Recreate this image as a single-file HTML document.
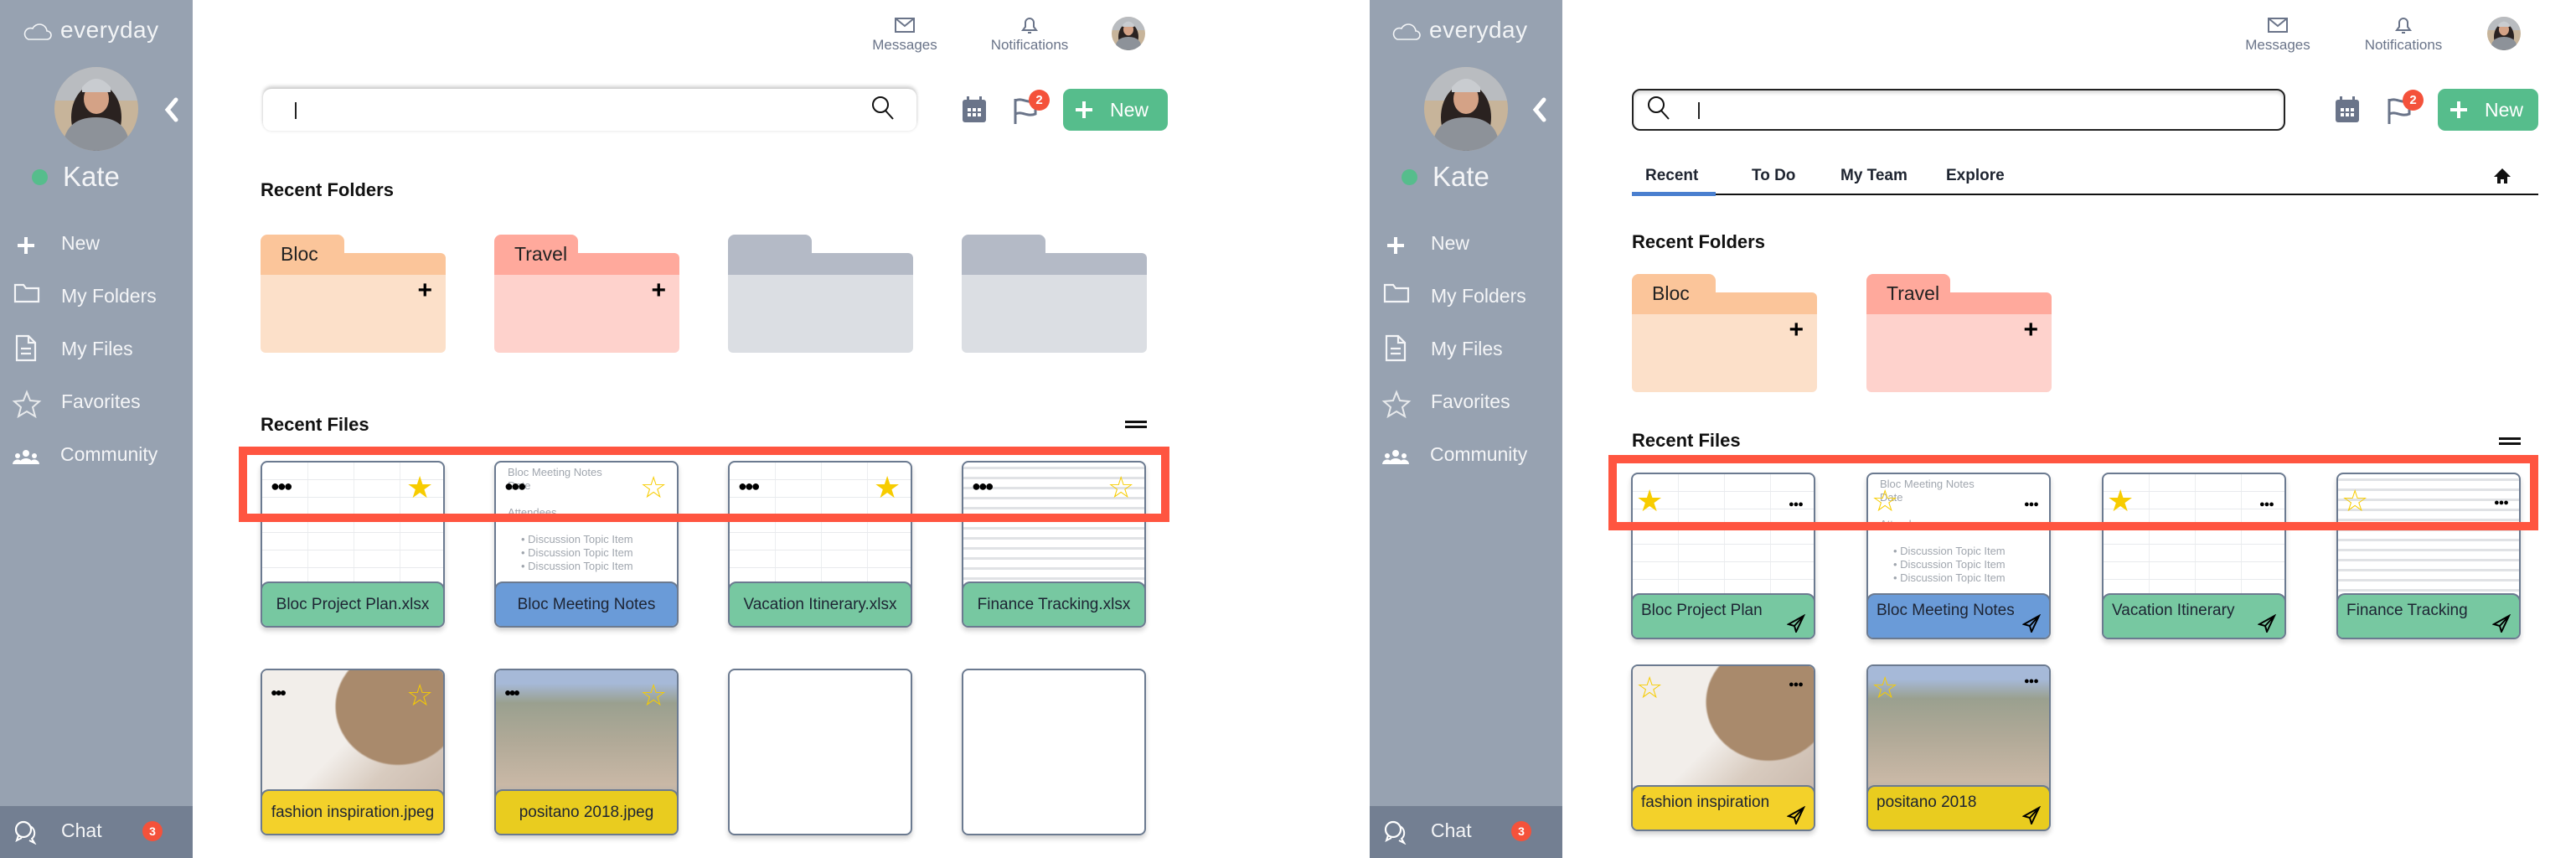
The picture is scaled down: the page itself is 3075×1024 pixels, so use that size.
<!DOCTYPE html>
<html><head><meta charset="utf-8"><style>
*{box-sizing:border-box;margin:0;padding:0}
body{width:3075px;height:1024px;position:relative;background:#fff;font-family:"Liberation Sans",sans-serif;overflow:hidden;color:#1e2430}
.a{position:absolute}
.side{position:absolute;top:0;width:230px;height:1024px;background:#97a2b1}
.chat{position:absolute;left:0;bottom:0;width:230px;height:62px;background:#737f92}
.logo{position:absolute;top:20px;color:#f2f4f6;font-size:28px;letter-spacing:0.5px}
.nav{position:absolute;color:#f4f5f7;font-size:23px}
.kate{position:absolute;color:#f4f5f7;font-size:33px}
.dot{position:absolute;width:19px;height:19px;border-radius:50%;background:#56bd8c}
.hd{position:absolute;color:#6a7489;font-size:17px;text-align:center;width:140px}
.search{position:absolute;top:106px;height:50px;border-radius:10px;background:#fff}
.newb{position:absolute;top:106px;height:50px;width:125px;background:#56bd8c;border-radius:9px;color:#fff;font-size:23px;line-height:50px}
.badge{position:absolute;background:#f4523b;color:#fff;border-radius:50%;text-align:center;font-weight:bold}
.h2{position:absolute;font-size:22px;font-weight:bold;color:#111}
.fold{position:absolute;width:221px;height:141px}
.fold .t{position:absolute;left:0;top:0;width:100px;height:30px;border-radius:8px 8px 0 0}
.fold .b1{position:absolute;left:0;top:22px;width:100%;height:26px;border-radius:0 6px 0 0}
.fold .b2{position:absolute;left:0;top:48px;width:100%;height:93px;border-radius:0 0 6px 6px}
.fold .nm{position:absolute;left:24px;top:10px;font-size:23px;color:#222}
.fold .pl{position:absolute;right:16px;top:50px;font-size:30px;font-weight:bold;color:#000}
.card{position:absolute;width:220px;height:199px;border:2px solid #6b7a90;border-radius:8px;background:#fff;overflow:hidden;box-shadow:0 4px 6px rgba(0,0,0,.18)}
.sheet{position:absolute;inset:0;background:repeating-linear-gradient(180deg,transparent 0 20px,#e8eaed 20px 21px),repeating-linear-gradient(90deg,transparent 0 54px,#eceef0 54px 55px)}
.band{position:absolute;left:-2px;right:-2px;bottom:-2px;height:55px;border:2px solid #6b7a90;border-radius:10px 10px 8px 8px;font-size:19px;color:#1d2433}
.star{position:absolute;font-size:36px;color:#f7cc00;line-height:36px}
.dots{position:absolute;font-size:18px;font-weight:bold;letter-spacing:-3px;color:#000}
.red{position:absolute;border:10px solid #ff5540}
.notes{position:absolute;left:14px;top:4px;color:#a0a6ae;font-size:13px;line-height:16px}
.photo1{position:absolute;inset:0;background:radial-gradient(ellipse at 75% 22%,#a98a6c 0 32%,transparent 33%),linear-gradient(135deg,#f2eeea 0 45%,#d8cbbf 65%,#c4b2a5)}
.photo2{position:absolute;inset:0;background:linear-gradient(180deg,#a6b9d8 0 8%,#9aa08f 20%,#b2aa98 45%,#c9b8a6 70%,#a4aab0 85%,#8e99a4)}
</style></head><body>

<svg width="0" height="0" style="position:absolute"><defs>
<clipPath id="cc"><circle cx="50" cy="50" r="50"/></clipPath>
<g id="face"><g clip-path="url(#cc)"><rect width="100" height="100" fill="#c7b49a"/><rect y="0" width="100" height="40" fill="#b9bcc0"/><ellipse cx="50" cy="60" rx="30" ry="40" fill="#2a2220"/><ellipse cx="50" cy="38" rx="15" ry="18" fill="#d4a286"/><path d="M33 24q17-20 34 0v6H33z" fill="#c9ccd0"/><path d="M10 100q0-40 40-40t40 40z" fill="#8d9299"/></g></g>
</defs></svg>

<!-- LEFT PANEL -->
<div class="side" style="left:0"></div>
<svg class="a" style="left:28px;top:26px" width="34" height="22" viewBox="0 0 34 22"><path d="M6 21h22a5 5 0 0 0 0-10 9 9 0 0 0-17-3 6 6 0 0 0-5 13z" fill="none" stroke="#f2f4f6" stroke-width="1.6"/></svg>
<div class="logo" style="left:72px">everyday</div>
<svg class="a" style="left:65px;top:80px" width="100" height="100" viewBox="0 0 100 100"><use href="#face"/></svg>
<svg class="a" style="left:195px;top:116px" width="20" height="30"><path d="M15 3L5 15l10 12" stroke="#fff" stroke-width="5" fill="none" stroke-linecap="round"/></svg>
<div class="dot" style="left:38px;top:202px"></div>
<div class="kate" style="left:75px;top:192px">Kate</div>
<svg class="a" style="left:0;top:270px" width="60" height="300">
<path d="M31 13v20M21 23h20" stroke="#fff" stroke-width="4"/>
<path d="M18 70h10l3 4h15v16H18z" fill="none" stroke="#f4f5f7" stroke-width="2.2"/>
<path d="M20 131h14l8 8v21H20z M34 131v8h8 M25 146h12M25 152h12" fill="none" stroke="#f4f5f7" stroke-width="2.2"/>
<path d="M32 198l4 10 11 1-8 7 3 11-10-6-10 6 3-11-8-7 11-1z" fill="none" stroke="#e8eaec" stroke-width="2"/>
<g fill="#fff"><circle cx="31" cy="271" r="4"/><circle cx="21" cy="274" r="3"/><circle cx="41" cy="274" r="3"/><path d="M23 284a8 7 0 0 1 16 0z"/><path d="M15 284a6 6 0 0 1 10-4v4z"/><path d="M37 280a6 6 0 0 1 10 4H37z"/></g>
</svg>
<div class="nav" style="left:73px;top:277px">New</div>
<div class="nav" style="left:73px;top:340px">My Folders</div>
<div class="nav" style="left:73px;top:403px">My Files</div>
<div class="nav" style="left:73px;top:466px">Favorites</div>
<div class="nav" style="left:72px;top:529px">Community</div>
<div class="chat"></div>
<svg class="a" style="left:16px;top:978px" width="30" height="30"><circle cx="12" cy="12" r="9" fill="none" stroke="#fff" stroke-width="2.2"/><path d="M6 19l-2 6 6-3" fill="none" stroke="#fff" stroke-width="2"/><path d="M20 8a9 9 0 0 1 2 15l3 5-6-3" fill="none" stroke="#fff" stroke-width="2"/></svg>
<div class="nav" style="left:73px;top:978px">Chat</div>
<div class="badge" style="left:170px;top:980px;width:24px;height:24px;font-size:14px;line-height:24px">3</div>

<svg class="a" style="left:1068px;top:21px" width="24" height="18"><rect x="1" y="1" width="22" height="16" fill="none" stroke="#6a7489" stroke-width="2"/><path d="M1 1l11 9 11-9" fill="none" stroke="#6a7489" stroke-width="2"/></svg>
<div class="hd" style="left:1010px;top:44px">Messages</div>
<svg class="a" style="left:1217px;top:18px" width="24" height="24"><path d="M4 18h16l-3-4V9a5 5 0 0 0-10 0v5z M10 21h4" fill="none" stroke="#6a7489" stroke-width="2"/></svg>
<div class="hd" style="left:1159px;top:44px">Notifications</div>
<svg class="a" style="left:1327px;top:20px" width="40" height="40" viewBox="0 0 100 100"><use href="#face"/></svg>

<div class="search" style="left:314px;width:780px;box-shadow:0 -3px 4px rgba(0,0,0,.2),0 1px 3px rgba(0,0,0,.08)"></div>
<div class="a" style="left:352px;top:122px;width:2px;height:20px;background:#222"></div>
<svg class="a" style="left:1040px;top:114px" width="30" height="34"><circle cx="11" cy="11" r="9" fill="none" stroke="#111" stroke-width="2"/><path d="M17 18l9 10" stroke="#111" stroke-width="2"/></svg>
<svg class="a" style="left:1148px;top:115px" width="30" height="32"><rect x="1" y="4" width="28" height="27" rx="3" fill="#6a7489"/><rect x="6" y="0" width="3" height="8" fill="#6a7489"/><rect x="21" y="0" width="3" height="8" fill="#6a7489"/><g fill="#fff"><rect x="7" y="14" width="4" height="4"/><rect x="13" y="14" width="4" height="4"/><rect x="19" y="14" width="4" height="4"/><rect x="7" y="20" width="4" height="4"/><rect x="13" y="20" width="4" height="4"/><rect x="19" y="20" width="4" height="4"/></g></svg>
<svg class="a" style="left:1208px;top:114px" width="32" height="34"><path d="M4 4v30 M4 6c8-4 14 4 24 0v16c-10 4-16-4-24 0" fill="none" stroke="#6a7489" stroke-width="3"/></svg>
<div class="badge" style="left:1228px;top:107px;width:25px;height:25px;font-size:15px;line-height:25px">2</div>
<div class="newb" style="left:1269px"><svg class="a" style="left:14px;top:14px" width="22" height="22"><path d="M11 1v20M1 11h20" stroke="#fff" stroke-width="4"/></svg><span style="position:absolute;left:56px">New</span></div>

<div class="h2" style="left:311px;top:214px">Recent Folders</div>
<div class="fold" style="left:311px;top:280px"><div class="t" style="background:#fbc59a"></div><div class="b1" style="background:#fbc59a"></div><div class="b2" style="background:#fce0c9"></div><div class="nm">Bloc</div><div class="pl">+</div></div>
<div class="fold" style="left:590px;top:280px"><div class="t" style="background:#ffa99c"></div><div class="b1" style="background:#ffa99c"></div><div class="b2" style="background:#fed2cc"></div><div class="nm">Travel</div><div class="pl">+</div></div>
<div class="fold" style="left:869px;top:280px"><div class="t" style="background:#b4bac6"></div><div class="b1" style="background:#b4bac6"></div><div class="b2" style="background:#dbdee3"></div></div>
<div class="fold" style="left:1148px;top:280px"><div class="t" style="background:#b4bac6"></div><div class="b1" style="background:#b4bac6"></div><div class="b2" style="background:#dbdee3"></div></div>

<div class="h2" style="left:311px;top:494px">Recent Files</div>
<div class="a" style="left:1343px;top:502px;width:26px;height:3px;background:#111;box-shadow:0 6px 0 #111"></div>

<div class="card" style="left:311px;top:550px"><div class="sheet"></div><div class="dots" style="left:10px;top:18px">●●●</div><div class="star" style="left:172px;top:12px">★</div><div class="band" style="background:#77c8a1;text-align:center;line-height:52px">Bloc Project Plan.xlsx</div></div>
<div class="card" style="left:590px;top:550px"><div class="notes">Bloc Meeting Notes<br>Date<br><br>Attendees<br><br><span style="margin-left:16px">• Discussion Topic Item</span><br><span style="margin-left:16px">• Discussion Topic Item</span><br><span style="margin-left:16px">• Discussion Topic Item</span></div><div class="dots" style="left:10px;top:18px">●●●</div><div class="star" style="left:172px;top:12px">☆</div><div class="band" style="background:#6a9bd8;text-align:center;line-height:52px">Bloc Meeting Notes</div></div>
<div class="card" style="left:869px;top:550px"><div class="sheet"></div><div class="dots" style="left:10px;top:18px">●●●</div><div class="star" style="left:172px;top:12px">★</div><div class="band" style="background:#77c8a1;text-align:center;line-height:52px">Vacation Itinerary.xlsx</div></div>
<div class="card" style="left:1148px;top:550px"><div class="sheet" style="background:repeating-linear-gradient(180deg,transparent 0 5px,#e0e2e5 5px 8px,transparent 8px 12px)"></div><div class="dots" style="left:10px;top:18px">●●●</div><div class="star" style="left:172px;top:12px">☆</div><div class="band" style="background:#77c8a1;text-align:center;line-height:52px">Finance Tracking.xlsx</div></div>
<div class="red" style="left:285px;top:533px;width:1111px;height:90px"></div>

<div class="card" style="left:311px;top:798px"><div class="photo1"></div><div class="dots" style="left:10px;top:18px;font-size:14px">●●●</div><div class="star" style="left:172px;top:12px">☆</div><div class="band" style="background:#f3d12a;text-align:center;line-height:52px">fashion inspiration.jpeg</div></div>
<div class="card" style="left:590px;top:798px"><div class="photo2"></div><div class="dots" style="left:10px;top:18px;font-size:14px">●●●</div><div class="star" style="left:172px;top:12px">☆</div><div class="band" style="background:#e9cc1f;text-align:center;line-height:52px">positano 2018.jpeg</div></div>
<div class="card" style="left:869px;top:798px"></div>
<div class="card" style="left:1148px;top:798px"></div>

<!-- RIGHT PANEL -->
<div class="side" style="left:1635px"></div>
<svg class="a" style="left:1662px;top:26px" width="34" height="22" viewBox="0 0 34 22"><path d="M6 21h22a5 5 0 0 0 0-10 9 9 0 0 0-17-3 6 6 0 0 0-5 13z" fill="none" stroke="#f2f4f6" stroke-width="1.6"/></svg>
<div class="logo" style="left:1706px">everyday</div>
<svg class="a" style="left:1700px;top:80px" width="100" height="100" viewBox="0 0 100 100"><use href="#face"/></svg>
<svg class="a" style="left:1828px;top:116px" width="20" height="30"><path d="M15 3L5 15l10 12" stroke="#fff" stroke-width="5" fill="none" stroke-linecap="round"/></svg>
<div class="dot" style="left:1673px;top:202px"></div>
<div class="kate" style="left:1710px;top:192px">Kate</div>
<svg class="a" style="left:1635px;top:270px" width="60" height="300">
<path d="M31 13v20M21 23h20" stroke="#fff" stroke-width="4"/>
<path d="M18 70h10l3 4h15v16H18z" fill="none" stroke="#f4f5f7" stroke-width="2.2"/>
<path d="M20 131h14l8 8v21H20z M34 131v8h8 M25 146h12M25 152h12" fill="none" stroke="#f4f5f7" stroke-width="2.2"/>
<path d="M32 198l4 10 11 1-8 7 3 11-10-6-10 6 3-11-8-7 11-1z" fill="none" stroke="#e8eaec" stroke-width="2"/>
<g fill="#fff"><circle cx="31" cy="271" r="4"/><circle cx="21" cy="274" r="3"/><circle cx="41" cy="274" r="3"/><path d="M23 284a8 7 0 0 1 16 0z"/><path d="M15 284a6 6 0 0 1 10-4v4z"/><path d="M37 280a6 6 0 0 1 10 4H37z"/></g>
</svg>
<div class="nav" style="left:1708px;top:277px">New</div>
<div class="nav" style="left:1708px;top:340px">My Folders</div>
<div class="nav" style="left:1708px;top:403px">My Files</div>
<div class="nav" style="left:1708px;top:466px">Favorites</div>
<div class="nav" style="left:1707px;top:529px">Community</div>
<div class="chat" style="left:1635px"></div>
<svg class="a" style="left:1651px;top:978px" width="30" height="30"><circle cx="12" cy="12" r="9" fill="none" stroke="#fff" stroke-width="2.2"/><path d="M6 19l-2 6 6-3" fill="none" stroke="#fff" stroke-width="2"/><path d="M20 8a9 9 0 0 1 2 15l3 5-6-3" fill="none" stroke="#fff" stroke-width="2"/></svg>
<div class="nav" style="left:1708px;top:978px">Chat</div>
<div class="badge" style="left:1804px;top:980px;width:24px;height:24px;font-size:14px;line-height:24px">3</div>

<svg class="a" style="left:2707px;top:21px" width="24" height="18"><rect x="1" y="1" width="22" height="16" fill="none" stroke="#6a7489" stroke-width="2"/><path d="M1 1l11 9 11-9" fill="none" stroke="#6a7489" stroke-width="2"/></svg>
<div class="hd" style="left:2649px;top:44px">Messages</div>
<svg class="a" style="left:2857px;top:18px" width="24" height="24"><path d="M4 18h16l-3-4V9a5 5 0 0 0-10 0v5z M10 21h4" fill="none" stroke="#6a7489" stroke-width="2"/></svg>
<div class="hd" style="left:2799px;top:44px">Notifications</div>
<svg class="a" style="left:2969px;top:20px" width="40" height="40" viewBox="0 0 100 100"><use href="#face"/></svg>

<div class="search" style="left:1948px;width:780px;border:2px solid #222;box-shadow:inset 0 3px 4px rgba(0,0,0,.15)"></div>
<svg class="a" style="left:1966px;top:114px" width="30" height="34"><circle cx="11" cy="11" r="9" fill="none" stroke="#111" stroke-width="2"/><path d="M17 18l9 10" stroke="#111" stroke-width="2"/></svg>
<div class="a" style="left:2027px;top:122px;width:2px;height:20px;background:#222"></div>
<svg class="a" style="left:2787px;top:115px" width="30" height="32"><rect x="1" y="4" width="28" height="27" rx="3" fill="#6a7489"/><rect x="6" y="0" width="3" height="8" fill="#6a7489"/><rect x="21" y="0" width="3" height="8" fill="#6a7489"/><g fill="#fff"><rect x="7" y="14" width="4" height="4"/><rect x="13" y="14" width="4" height="4"/><rect x="19" y="14" width="4" height="4"/><rect x="7" y="20" width="4" height="4"/><rect x="13" y="20" width="4" height="4"/><rect x="19" y="20" width="4" height="4"/></g></svg>
<svg class="a" style="left:2848px;top:114px" width="32" height="34"><path d="M4 4v30 M4 6c8-4 14 4 24 0v16c-10 4-16-4-24 0" fill="none" stroke="#6a7489" stroke-width="3"/></svg>
<div class="badge" style="left:2868px;top:107px;width:25px;height:25px;font-size:15px;line-height:25px">2</div>
<div class="newb" style="left:2910px;width:120px"><svg class="a" style="left:14px;top:14px" width="22" height="22"><path d="M11 1v20M1 11h20" stroke="#fff" stroke-width="4"/></svg><span style="position:absolute;left:56px">New</span></div>

<div class="a" style="left:1964px;top:199px;font-size:19px;font-weight:bold">Recent</div>
<div class="a" style="left:2091px;top:199px;font-size:19px;font-weight:bold">To Do</div>
<div class="a" style="left:2197px;top:199px;font-size:19px;font-weight:bold">My Team</div>
<div class="a" style="left:2323px;top:199px;font-size:19px;font-weight:bold">Explore</div>
<svg class="a" style="left:2976px;top:200px" width="22" height="20"><path d="M11 1L1 11h4v8h4v-5h4v5h4v-8h4z" fill="#111"/></svg>
<div class="a" style="left:1948px;top:231px;width:1082px;height:2px;background:#111"></div>
<div class="a" style="left:1948px;top:229px;width:100px;height:5px;background:#4a7fcf"></div>

<div class="h2" style="left:1948px;top:276px">Recent Folders</div>
<div class="fold" style="left:1948px;top:327px"><div class="t" style="background:#fbc59a"></div><div class="b1" style="background:#fbc59a"></div><div class="b2" style="background:#fce0c9"></div><div class="nm">Bloc</div><div class="pl">+</div></div>
<div class="fold" style="left:2228px;top:327px"><div class="t" style="background:#ffa99c"></div><div class="b1" style="background:#ffa99c"></div><div class="b2" style="background:#fed2cc"></div><div class="nm">Travel</div><div class="pl">+</div></div>

<div class="h2" style="left:1948px;top:513px">Recent Files</div>
<div class="a" style="left:2983px;top:522px;width:26px;height:3px;background:#111;box-shadow:0 6px 0 #111"></div>

<div class="card" style="left:1947px;top:564px"><div class="sheet"></div><div class="star" style="left:4px;top:14px">★</div><div class="dots" style="left:186px;top:30px;font-size:11px;letter-spacing:-1px">●●●</div><div class="band" style="background:#77c8a1;padding:8px 10px">Bloc Project Plan<svg class="a" style="right:10px;bottom:6px" width="22" height="22"><path d="M20 2L2 12l7 2 2 7z M20 2L9 14" fill="none" stroke="#000" stroke-width="2"/></svg></div></div>
<div class="card" style="left:2228px;top:564px"><div class="notes">Bloc Meeting Notes<br>Date<br><br>Attendees<br><br><span style="margin-left:16px">• Discussion Topic Item</span><br><span style="margin-left:16px">• Discussion Topic Item</span><br><span style="margin-left:16px">• Discussion Topic Item</span></div><div class="star" style="left:4px;top:14px">☆</div><div class="dots" style="left:186px;top:30px;font-size:11px;letter-spacing:-1px">●●●</div><div class="band" style="background:#6a9bd8;padding:8px 10px">Bloc Meeting Notes<svg class="a" style="right:10px;bottom:6px" width="22" height="22"><path d="M20 2L2 12l7 2 2 7z M20 2L9 14" fill="none" stroke="#000" stroke-width="2"/></svg></div></div>
<div class="card" style="left:2509px;top:564px"><div class="sheet"></div><div class="star" style="left:4px;top:14px">★</div><div class="dots" style="left:186px;top:30px;font-size:11px;letter-spacing:-1px">●●●</div><div class="band" style="background:#77c8a1;padding:8px 10px">Vacation Itinerary<svg class="a" style="right:10px;bottom:6px" width="22" height="22"><path d="M20 2L2 12l7 2 2 7z M20 2L9 14" fill="none" stroke="#000" stroke-width="2"/></svg></div></div>
<div class="card" style="left:2789px;top:564px"><div class="sheet" style="background:repeating-linear-gradient(180deg,transparent 0 5px,#e0e2e5 5px 8px,transparent 8px 12px)"></div><div class="star" style="left:4px;top:14px">☆</div><div class="dots" style="left:186px;top:28px;font-size:11px;letter-spacing:-1px">●●●</div><div class="band" style="background:#77c8a1;padding:8px 10px">Finance Tracking<svg class="a" style="right:10px;bottom:6px" width="22" height="22"><path d="M20 2L2 12l7 2 2 7z M20 2L9 14" fill="none" stroke="#000" stroke-width="2"/></svg></div></div>
<div class="red" style="left:1920px;top:543px;width:1110px;height:90px"></div>

<div class="card" style="left:1947px;top:793px"><div class="photo1"></div><div class="star" style="left:4px;top:8px">☆</div><div class="dots" style="left:186px;top:16px;font-size:11px;letter-spacing:-1px">●●●</div><div class="band" style="background:#f3d12a;padding:8px 10px">fashion inspiration<svg class="a" style="right:10px;bottom:6px" width="22" height="22"><path d="M20 2L2 12l7 2 2 7z M20 2L9 14" fill="none" stroke="#000" stroke-width="2"/></svg></div></div>
<div class="card" style="left:2228px;top:793px"><div class="photo2"></div><div class="star" style="left:4px;top:8px">☆</div><div class="dots" style="left:186px;top:12px;font-size:11px;letter-spacing:-1px">●●●</div><div class="band" style="background:#e9cc1f;padding:8px 10px">positano 2018<svg class="a" style="right:10px;bottom:6px" width="22" height="22"><path d="M20 2L2 12l7 2 2 7z M20 2L9 14" fill="none" stroke="#000" stroke-width="2"/></svg></div></div>

</body></html>
